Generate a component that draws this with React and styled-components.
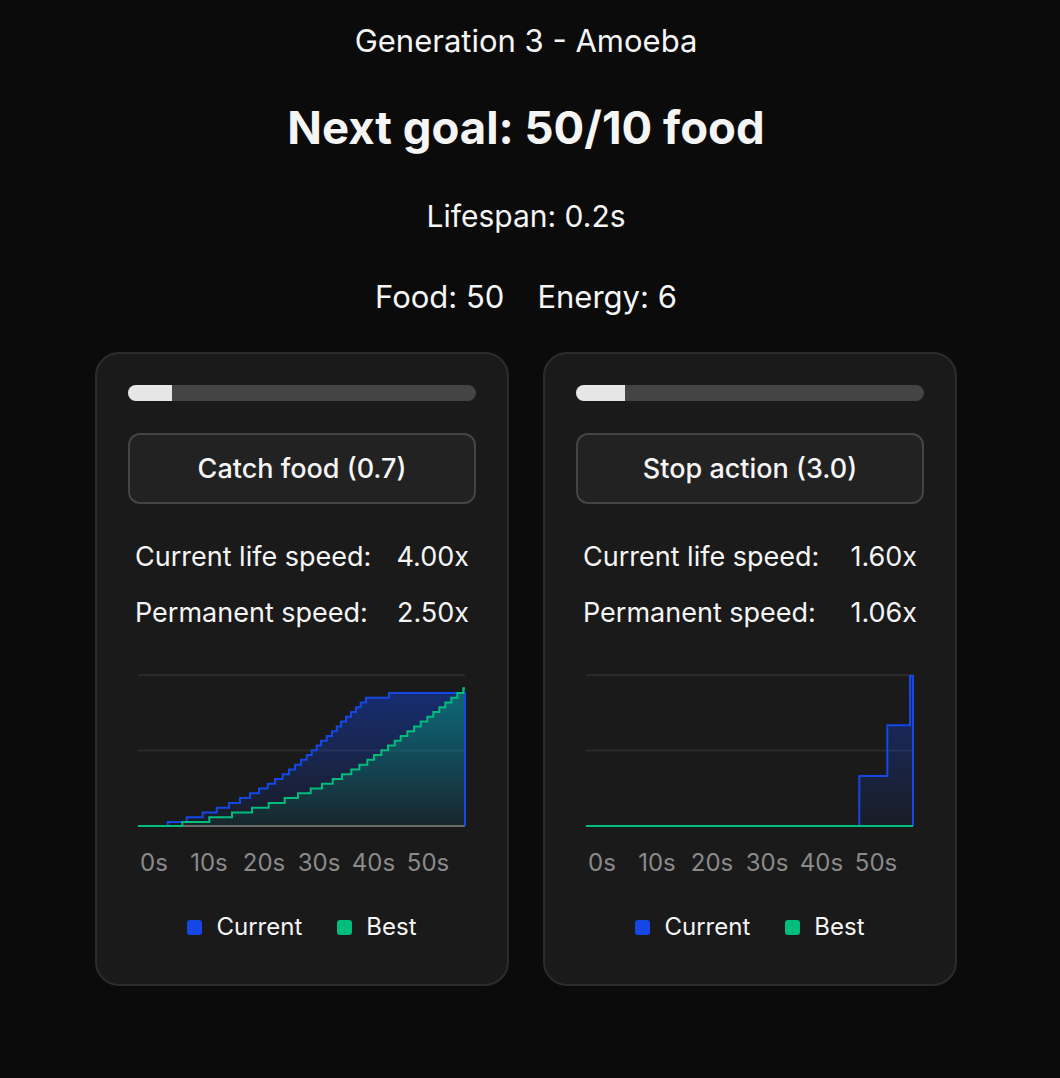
import React from 'react';
import styled, { createGlobalStyle } from 'styled-components';

const GlobalStyle = createGlobalStyle`
  html, body {
    margin: 0;
    padding: 0;
    background: #0b0b0b;
    color: #f5f5f5;
    font-family: Inter, "Noto Sans", sans-serif;
  }
`;

const Page = styled.div`
  display: flex;
  flex-direction: column;
  align-items: center;
  padding: 24px 8px 60px 0;
`;

const Generation = styled.div`
  font-size: 31px;
  line-height: 34px;
`;

const Goal = styled.h1`
  margin: 44px 0 0;
  font-size: 45.5px;
  line-height: 52px;
  font-weight: 700;
`;

const InfoLine = styled.div`
  margin-top: ${p => p.$gap}px;
  font-size: ${p => p.$size}px;
  line-height: 34px;
  display: flex;
  gap: 33px;
`;

const Cards = styled.div`
  margin-top: 38px;
  display: flex;
  gap: 34px;
`;

const Card = styled.div`
  width: 414px;
  box-sizing: border-box;
  padding: 31px 31px 42px;
  border: 2px solid #2c2c2c;
  border-radius: 24px;
  background: #1a1a1a;
`;

const Track = styled.div`
  height: 16px;
  border-radius: 8px;
  background: #444;
  overflow: hidden;
`;

const Fill = styled.div`
  height: 100%;
  background: #e6e6e6;
`;

const ActionButton = styled.button`
  margin-top: 32px;
  width: 100%;
  height: 71px;
  border: 2px solid #444;
  border-radius: 12px;
  background: #222;
  color: #f5f5f5;
  font-family: Inter, sans-serif;
  font-size: 27px;
  font-weight: 500;
`;

const Stats = styled.div`
  margin-top: 37px;
  padding: 0 7px;
  display: flex;
  flex-direction: column;
  gap: 24px;
`;

const StatRow = styled.div`
  display: flex;
  justify-content: space-between;
  font-size: 27px;
  line-height: 32px;
`;

const ChartSvg = styled.svg`
  display: block;
  margin-top: 41px;
  overflow: visible;
`;

const Legend = styled.div`
  margin-top: 32px;
  display: flex;
  justify-content: center;
  gap: 35px;
  font-size: 24px;
  line-height: 30px;
`;

const LegendItem = styled.div`
  display: flex;
  align-items: center;
  gap: 14px;
`;

const Swatch = styled.span`
  width: 15px;
  height: 15px;
  border-radius: 3px;
  background: ${p => p.$color};
`;

const BLUE = '#1447e6';
const GREEN = '#00bc7d';
const W = 327;
const H = 151;

const stepLine = (xs, ys, drop) => {
  let d = `M0,${H}`;
  xs.forEach((x, i) => {
    d += ` H${x} V${ys[i]}`;
  });
  d += ` H${W}`;
  if (drop) d += ` V${H}`;
  return d;
};

const stepArea = (xs, ys) => stepLine(xs, ys, true) + ` H0 Z`;

const blueXs = [29.7, 48.7, 64.7, 78.7, 91, 102, 112, 121, 129.7, 137, 144.7, 151, 157, 163, 168.7, 173.7, 178.7, 183, 188.7, 194, 198.7, 203, 208, 213, 218, 222.7, 228, 251];
const greenXs = [44.3, 71.3, 94, 114, 130.7, 146.7, 160, 172.7, 184, 194.7, 204, 213.3, 221.3, 229.3, 236, 243.3, 250, 256.7, 262.7, 269.3, 276, 282.7, 289.3, 295.3, 301.3, 307.3, 313.3, 319.3, 325.3];
const stepYs = n => Array.from({ length: n }, (_, k) => 147 - k * 4.78);

const ticks = [
  { x: 26, label: '0s' },
  { x: 81, label: '10s' },
  { x: 136, label: '20s' },
  { x: 191, label: '30s' },
  { x: 245.5, label: '40s' },
  { x: 300, label: '50s' },
];

const Chart = ({ id, current, best }) => (
  <ChartSvg width="348" height="210" viewBox="0 0 348 210">
    <defs>
      <linearGradient id={`${id}-b`} x1="0" y1="0" x2="0" y2="1">
        <stop offset="0%" stopColor={BLUE} stopOpacity="0.42" />
        <stop offset="100%" stopColor={BLUE} stopOpacity="0.06" />
      </linearGradient>
      <linearGradient id={`${id}-g`} x1="0" y1="0" x2="0" y2="1">
        <stop offset="0%" stopColor={GREEN} stopOpacity="0.42" />
        <stop offset="100%" stopColor={GREEN} stopOpacity="0.06" />
      </linearGradient>
    </defs>
    <g transform="translate(10,5)">
      <line x1="0" x2={W} y1="0" y2="0" stroke="#2a2a2a" strokeWidth="2" />
      <line x1="0" x2={W} y1="75.5" y2="75.5" stroke="#2a2a2a" strokeWidth="2" />
      {current && <path d={stepArea(current.xs, current.ys)} fill={`url(#${id}-b)`} />}
      {best && <path d={stepArea(best.xs, best.ys)} fill={`url(#${id}-g)`} />}
      <line x1="0" x2={W} y1={H} y2={H} stroke="#6b6b6b" strokeWidth="2" />
      {current && <path d={stepLine(current.xs, current.ys, true)} fill="none" stroke={BLUE} strokeWidth="2" />}
      <path d={best ? stepLine(best.xs, best.ys, false) : `M0,${H} H${W}`} fill="none" stroke={GREEN} strokeWidth="2" />
    </g>
    {ticks.map(t => (
      <text key={t.label} x={t.x} y="201" textAnchor="middle" fill="#8a8a8a" fontSize="24" fontFamily="Inter, sans-serif">
        {t.label}
      </text>
    ))}
  </ChartSvg>
);

const ActionCard = ({ id, progress, action, lifeSpeed, permSpeed, current, best }) => (
  <Card>
    <Track>
      <Fill style={{ width: `${progress}%` }} />
    </Track>
    <ActionButton>{action}</ActionButton>
    <Stats>
      <StatRow>
        <span>Current life speed:</span>
        <span>{lifeSpeed}</span>
      </StatRow>
      <StatRow>
        <span>Permanent speed:</span>
        <span>{permSpeed}</span>
      </StatRow>
    </Stats>
    <Chart id={id} current={current} best={best} />
    <Legend>
      <LegendItem>
        <Swatch $color={BLUE} />
        Current
      </LegendItem>
      <LegendItem>
        <Swatch $color={GREEN} />
        Best
      </LegendItem>
    </Legend>
  </Card>
);

export default function App() {
  return (
    <>
      <GlobalStyle />
      <Page>
        <Generation>Generation 3 - Amoeba</Generation>
        <Goal>Next goal: 50/10 food</Goal>
        <InfoLine $gap={45} $size={30}>Lifespan: 0.2s</InfoLine>
        <InfoLine $gap={47} $size={31}>
          <span>Food: 50</span>
          <span>Energy: 6</span>
        </InfoLine>
        <Cards>
          <ActionCard
            id="catch"
            progress={12.6}
            action="Catch food (0.7)"
            lifeSpeed="4.00x"
            permSpeed="2.50x"
            current={{ xs: blueXs, ys: stepYs(blueXs.length) }}
            best={{ xs: greenXs, ys: stepYs(greenXs.length) }}
          />
          <ActionCard
            id="stop"
            progress={14}
            action="Stop action (3.0)"
            lifeSpeed="1.60x"
            permSpeed="1.06x"
            current={{ xs: [273.3, 301.3, 324], ys: [101, 50.3, 1] }}
          />
        </Cards>
      </Page>
    </>
  );
}
